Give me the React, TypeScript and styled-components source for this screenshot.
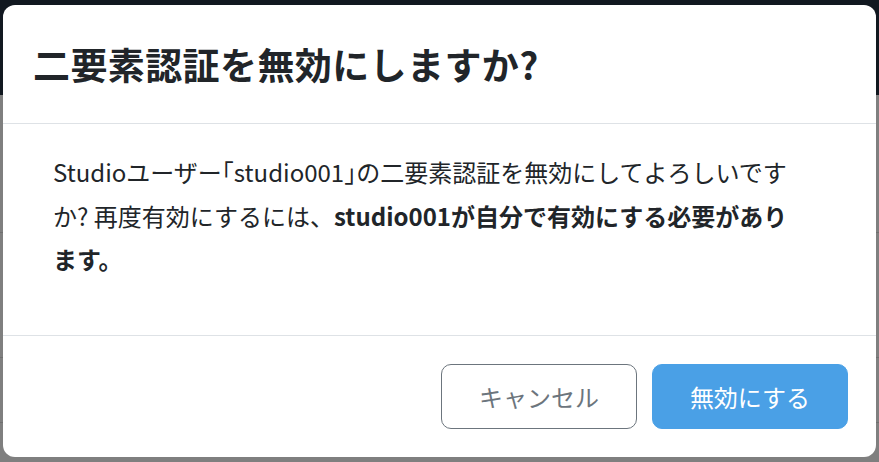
import React from "react";
import styled, { createGlobalStyle } from "styled-components";

const Global = createGlobalStyle`
  html, body { margin: 0; padding: 0; }
  body {
    width: 879px;
    height: 462px;
    overflow: hidden;
    font-family: "Noto Sans CJK JP", "Noto Sans", sans-serif;
    color: #212529;
  }
`;

const Page = styled.div`
  position: relative;
  width: 879px;
  height: 462px;
  display: flex;
  flex-direction: column;
  background: #7f7f7f;
`;

const PageHeader = styled.div`
  height: 95px;
  background: #111820;
`;

const PageRow = styled.div<{ $h: number }>`
  height: ${(p) => p.$h}px;
  border-bottom: 1px solid #6f6f6f;
`;

const Backdrop = styled.div`
  position: absolute;
  inset: 0;
  display: flex;
  align-items: center;
  justify-content: center;
`;

const Modal = styled.div`
  width: 873px;
  height: 452px;
  background: #fff;
  border-radius: 12px;
  display: flex;
  flex-direction: column;
  overflow: hidden;
`;

const Header = styled.div`
  height: 119px;
  box-sizing: border-box;
  border-bottom: 1px solid #dee2e6;
  display: flex;
  align-items: center;
  padding: 0 30px;
`;

const Title = styled.h2`
  margin: 0;
  font-size: 37px;
  font-weight: 700;
  line-height: 1.2;
  color: #212529;
  letter-spacing: 0.4px;
`;

const Body = styled.div`
  flex: 1;
  box-sizing: border-box;
  padding: 26px 50px 0 50px;
`;

const Text = styled.p`
  margin: 0;
  max-width: 748px;
  font-size: 24px;
  line-height: 43.5px;
  color: #212529;
  strong { font-weight: 700; }
`;

const Bracket = styled.span`
  font-feature-settings: "halt";
`;

const Footer = styled.div`
  height: 122px;
  box-sizing: border-box;
  border-top: 1px solid #dee2e6;
  display: flex;
  align-items: center;
  justify-content: flex-end;
  gap: 15px;
  padding: 0 28px;
`;

const Button = styled.button<{ $primary?: boolean }>`
  width: 196px;
  height: 65px;
  box-sizing: border-box;
  border-radius: 10px;
  font-family: inherit;
  font-size: 24px;
  cursor: pointer;
  border: 1px solid ${(p) => (p.$primary ? "#4aa0e6" : "#6c757d")};
  background: ${(p) => (p.$primary ? "#4aa0e6" : "#fff")};
  color: ${(p) => (p.$primary ? "#fff" : "#6c757d")};
`;

export default function App() {
  return (
    <>
      <Global />
      <Page>
        <PageHeader />
        <PageRow $h={137} />
        <PageRow $h={124} />
        <PageRow $h={64} />
        <Backdrop>
          <Modal>
            <Header>
              <Title>二要素認証を無効にしますか?</Title>
            </Header>
            <Body>
              <Text>
                Studioユーザー<Bracket>「</Bracket>studio001<Bracket>」</Bracket>の二要素認証を無効にしてよろしいですか? 再度有効にするには、
                <strong>studio001が自分で有効にする必要があります。</strong>
              </Text>
            </Body>
            <Footer>
              <Button>キャンセル</Button>
              <Button $primary>無効にする</Button>
            </Footer>
          </Modal>
        </Backdrop>
      </Page>
    </>
  );
}
